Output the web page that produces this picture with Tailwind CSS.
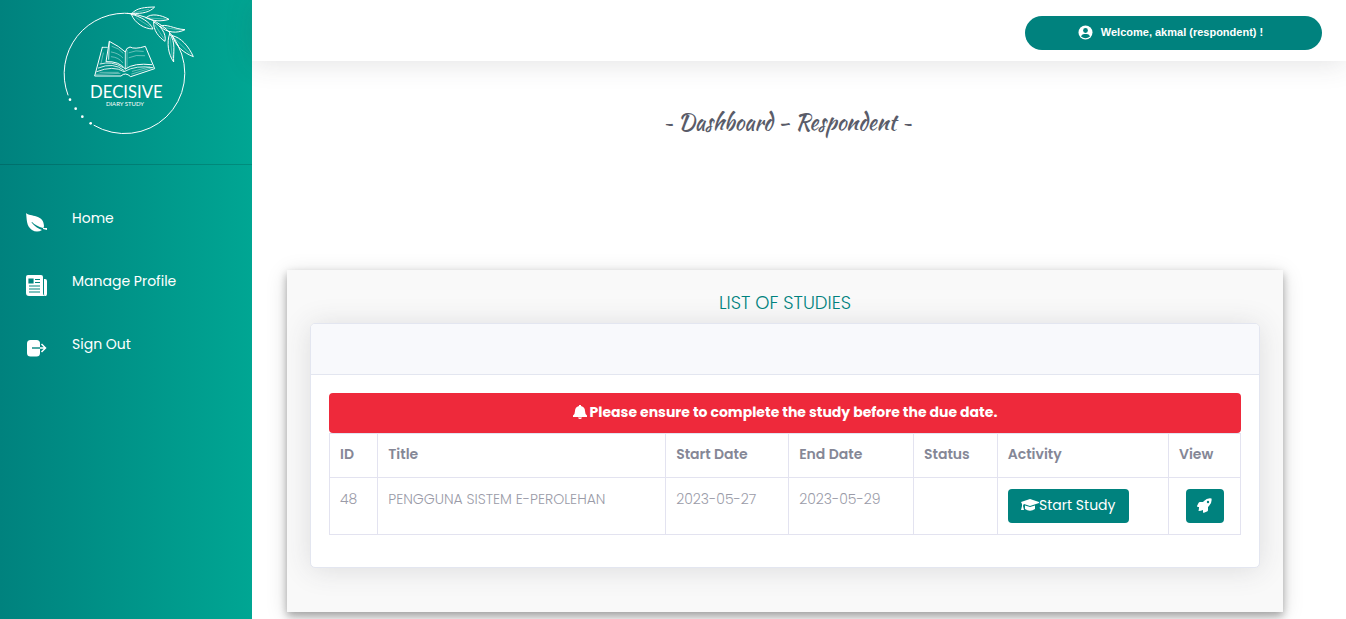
<!DOCTYPE html>
<html lang="en">
<head>
<meta charset="utf-8">
<meta name="viewport" content="width=device-width, initial-scale=1">
<title>Decisive Diary Study</title>
<script src="https://cdn.jsdelivr.net/npm/@tailwindcss/browser@4"></script>
</head>
<body class="flex min-h-screen overflow-x-hidden bg-white font-['Poppins','Inter',sans-serif] text-[#858796]">
<aside class="w-[252px] shrink-0 bg-linear-to-r from-[#00827e] to-[#00a693] text-white">
  <a href="#" class="flex h-[165px] justify-center border-b border-black/15 pr-[2px]" aria-label="Decisive Diary Study">
    <svg class="h-[140px] w-[150px]" viewBox="0 0 450 420" fill="none" stroke="#fff" stroke-width="3" stroke-linecap="round" stroke-linejoin="round">
      <path d="M54 285A181 181 0 0 1 246 41M384 136A181 181 0 0 1 132 376"/>
      <g fill="#fff" stroke="none"><circle cx="60" cy="299" r="4"/><circle cx="77" cy="326" r="4"/><circle cx="97" cy="350" r="4"/><circle cx="122" cy="370" r="4"/></g>
      <g stroke-width="3">
        <path d="M232 40C278 43 333 66 362 101Q374 116 384 136"/>
        <path d="M246 40C261 23 285 22 314 21C300 36 278 42 246 40Z"/>
        <path d="M244 43C270 49 300 65 309 87C284 87 254 70 244 43Z"/>
        <path d="M288 53C302 39 333 44 357 58C333 65 309 64 288 53Z"/>
        <path d="M311 66C330 76 350 99 345 124C327 112 309 91 311 66Z"/>
        <path d="M330 79C348 69 371 87 405 89C382 101 350 99 330 79Z"/>
        <path d="M359 101C349 128 355 163 371 186C369 157 379 128 359 101Z"/>
        <path d="M367 107C393 112 416 139 430 170C400 158 377 139 367 107Z"/>
        <path d="M253 38L296 28M258 53L300 80M295 54L345 57M315 75L341 115M338 82L391 90M361 113L367 174M374 115L419 160" stroke-width="1"/>
      </g>
      <g stroke-width="3">
        <path d="M157 142L134 228L213 228Q226 215 242 230L314 206L286 139Q254 149 240 141Q228 143 226 156Q208 139 178 124L168 185Q207 183 226 207Q252 188 305 194"/>
        <path d="M157 142L172 142M178 124L176 178M226 156V207M140 215Q190 195 222 215Q260 194 309 203M145 204Q190 185 222 211M150 192Q186 182 218 202" stroke-width="2.5"/>
        <path d="M186 139Q207 144 219 159M184 156Q207 160 218 173M184 170Q207 172 218 188M237 158Q257 149 280 154M237 173Q258 163 284 167M138 223L210 220M245 222L307 203M150 217L205 217M247 214L299 201M160 159L153 190M231 151V202" stroke-width="1.2"/>
      </g>
      <g fill="#fff" stroke="none" text-anchor="middle"><text x="229" y="293" class="font-['Lato',sans-serif] text-[50px]">DECISIVE</text><text x="225" y="318" class="font-['Lato',sans-serif] text-[18px]">DIARY STUDY</text></g>
    </svg>
  </a>
  <nav class="pt-[43px] text-sm font-normal">
    <a href="#" class="flex h-[63px] items-start pl-[26px]">
      <svg class="mt-[5px] mr-[25px] size-[21px]" viewBox="0 0 21 21" fill="#fff"><path d="M0 0C4 4 18 1 18 13Q18 15 17 15Q10 13 6 9Q5 9 6 10Q10 15 16 17Q11 20 6 17C0 13 1 6 0 0ZM17 15L21 15V17L17 16Z"/></svg>Home
    </a>
    <a href="#" class="flex h-[63px] items-start pl-[26px]">
      <svg class="mt-1 mr-[25px] size-[21px]" viewBox="0 0 21 21"><path fill="#fff" d="M2 0H15Q17 0 17 2V18Q17 21 20 21H3Q0 21 0 18V2Q0 0 2 0ZM18 4H19Q21 4 21 6V19Q21 21 19.5 21Q18 21 18 19Z"/><path d="M3 4H7V8H3ZM9 4.5H14M9 7.5H14M3 11H14M3 14H14M3 17H14" fill="#00857f" stroke="#00857f" stroke-width="1.2"/></svg>Manage Profile
    </a>
    <a href="#" class="flex h-[63px] items-start pl-[26px]">
      <svg class="mt-1 mr-[25px] size-[21px]" viewBox="0 0 21 21" fill="none"><rect x="1" y="2" width="13" height="16.500" rx="3.500" fill="#fff"/><path d="M6 10H14" stroke="#00857f" stroke-width="1.400"/><path d="M14 10H19M15.500 6L19.500 10L15.500 14" stroke="#fff" stroke-width="1.500"/></svg>Sign Out
    </a>
  </nav>
</aside>
<div class="flex min-w-0 flex-1 flex-col">
  <header class="flex h-[61px] shrink-0 items-center justify-end pr-6 shadow-[0_2px_28px_rgba(58,59,69,0.15)]">
    <button type="button" class="mt-1 flex h-[34px] w-[297px] items-center justify-center gap-2 rounded-full bg-[#00827e] pr-[6px] font-['Liberation_Sans',sans-serif] text-[11px] font-bold text-white">
      <svg class="size-[15px]" viewBox="0 0 15 15"><circle cx="7.500" cy="7.500" r="7" fill="#fff"/><circle cx="7.500" cy="5.500" r="2.400" fill="#00827e"/><path d="M3 11.500Q3.500 9 6 9H9Q11.500 9 12 11.500Q7.500 15 3 11.500Z" fill="#00827e"/></svg>
      Welcome, akmal (respondent) !
    </button>
  </header>
  <main class="flex-1 pr-[63px] pl-[35px]">
    <h1 class="pt-[43px] pl-1 text-center font-['Kaushan_Script','Lato',cursive] text-[22px] leading-9 font-normal text-[#5a5c69]">~ Dashboard - Respondent ~</h1>
    <section class="mt-[130px] bg-[#f9f9f9] px-[23px] pt-[19px] pb-11 shadow-[0_4px_8px_rgba(0,0,0,0.3),0_4px_20px_rgba(0,0,0,0.15)]">
      <h2 class="text-center text-[18px] leading-7 font-light text-[#00827e]">LIST OF STUDIES</h2>
      <div class="mt-[6px] rounded-[5px] border border-[#e3e6f0] bg-white shadow-[0_2px_28px_rgba(58,59,69,0.15)]">
        <div class="h-[51px] rounded-t border-b border-[#e3e6f0] bg-[#f8f9fc]"></div>
        <div class="px-[18px] pt-[18px] pb-8">
          <div role="alert" class="flex h-10 items-center justify-center gap-[3px] rounded bg-[#ee293b] pb-[2px] text-[14px] font-bold text-white">
            <svg class="size-[14px]" viewBox="0 0 14 14" fill="#fff"><path d="M6 0H8V1Q12 2 12 6Q12 9 14 10.500V12H0V10.500Q2 9 2 6Q2 2 6 1ZM5 12.500H9Q8.500 14 7 14Q5.500 14 5 12.500Z"/></svg>
            Please ensure to complete the study before the due date.
          </div>
          <table class="w-full table-fixed border-collapse text-left text-sm [&_td]:border [&_td]:border-[#e3e3f0] [&_td]:px-[10px] [&_td]:pt-[11px] [&_td]:align-top [&_th]:border [&_th]:border-[#e3e3f0] [&_th]:px-[10px] [&_th]:pb-1 [&_th]:font-semibold">
            <colgroup><col class="w-[5.3%]"><col class="w-[31.6%]"><col class="w-[13.5%]"><col class="w-[13.7%]"><col class="w-[9.2%]"><col class="w-[18.8%]"><col class="w-[7.9%]"></colgroup>
            <thead><tr class="h-11"><th scope="col">ID</th><th scope="col">Title</th><th scope="col">Start Date</th><th scope="col">End Date</th><th scope="col">Status</th><th scope="col">Activity</th><th scope="col">View</th></tr></thead>
            <tbody><tr class="h-[57px] font-light text-[#9a9ba8]">
              <td>48</td><td>PENGGUNA SISTEM E-PEROLEHAN</td><td>2023-05-27</td><td>2023-05-29</td><td></td>
              <td><button type="button" class="flex h-[34px] w-[121px] items-center justify-center rounded bg-[#00827e] pb-[2px] text-[14px] font-normal whitespace-nowrap text-white"><svg class="h-[14px] w-[18px] shrink-0" viewBox="0 0 18 14" fill="#fff"><path d="M0 4L9 1L18 4V5L9 8L3 6Q2 7 2 8L3 12H0L1 8V6ZM4 7.500L9 9L14 7.500V11Q9 14.500 4 11Z"/></svg>Start Study</button></td>
              <td><button type="button" aria-label="View study" class="mx-auto flex h-[34px] w-[38px] items-center justify-center rounded bg-[#00827e] pb-[2px]"><svg class="size-[15px]" viewBox="0 0 15 15"><path fill="#fff" d="M14.500 .5Q10 -.2 7 3L6 4H3Q2 4 1.500 5L0 8Q0 9 1 9H2Q2 11 1.500 13Q4 13 6 12V14.500Q6.500 15 7 14.800L10 13.500Q11 13 11 12V9L12 8Q15.200 5 14.500 .5Z"/><circle cx="11" cy="4" r="1.200" fill="#00827e"/></svg></button></td>
            </tr></tbody>
          </table>
        </div>
      </div>
    </section>
  </main>
</div>
</body>
</html>
